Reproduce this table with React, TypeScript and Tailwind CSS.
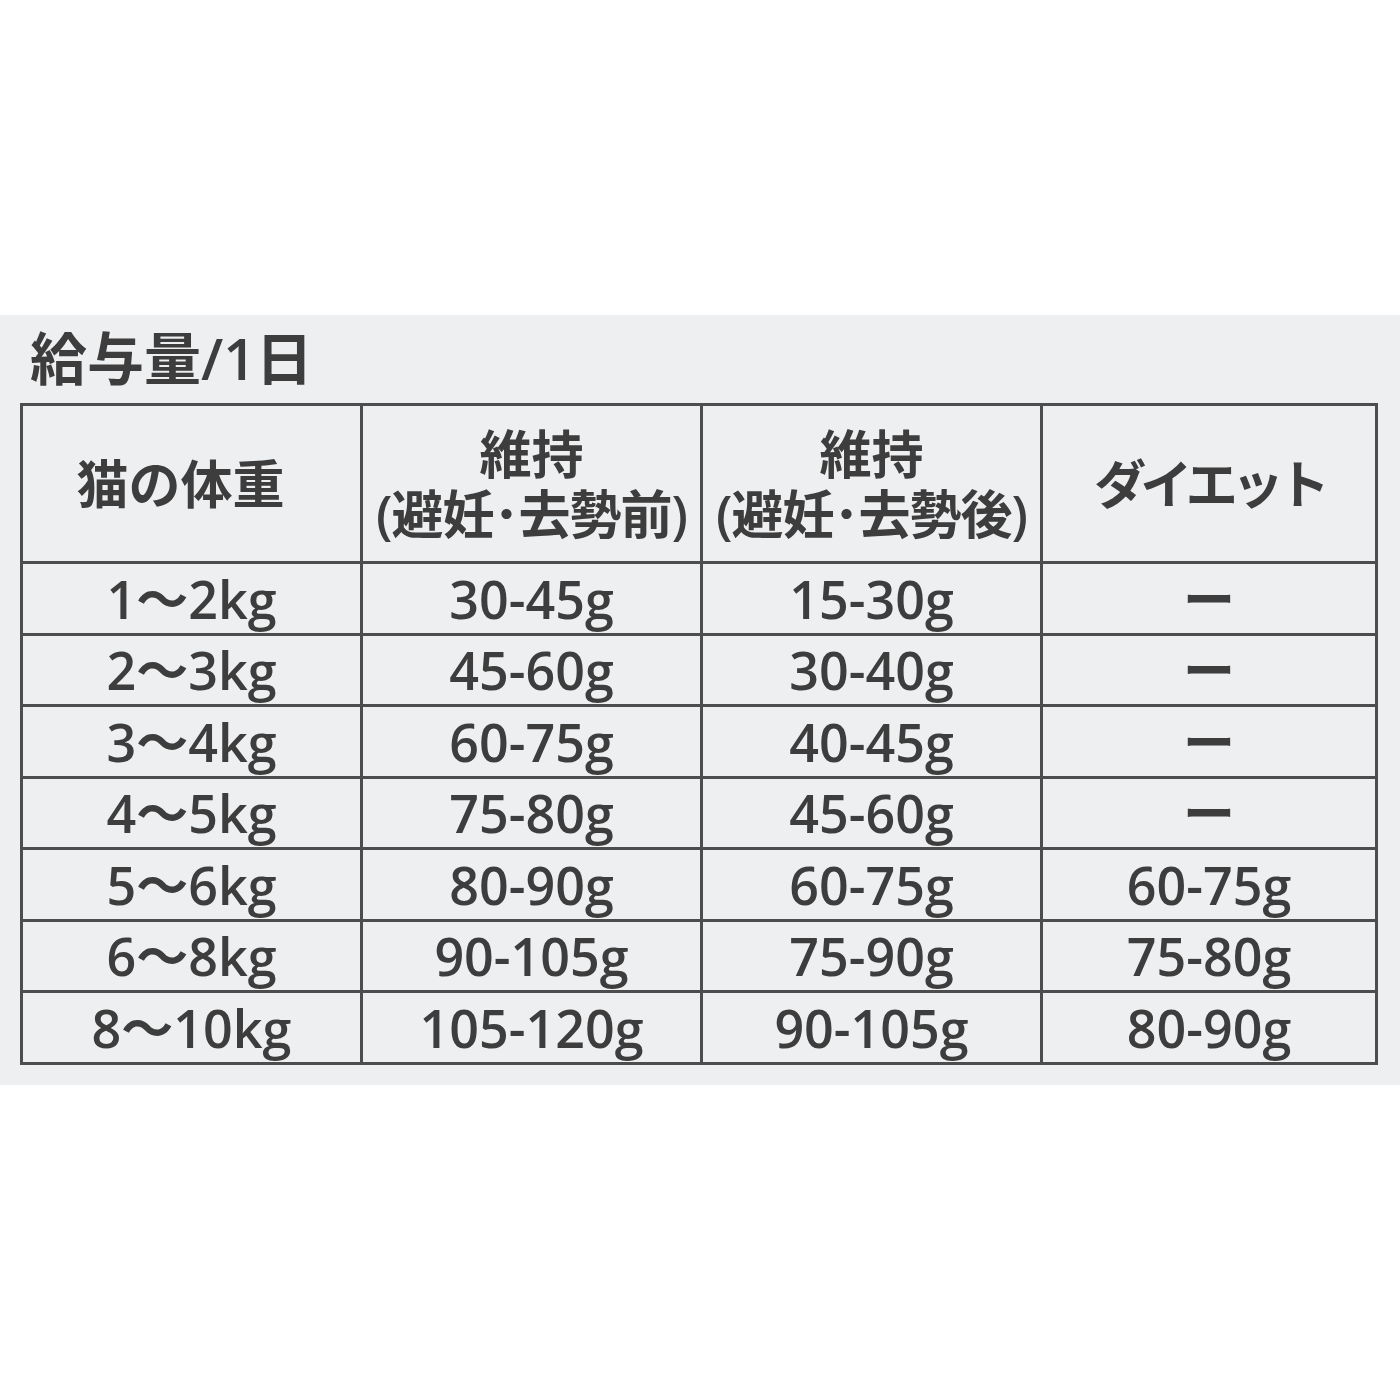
const font = { fontFamily: '"Open Sans", "Noto Sans CJK JP", sans-serif' };

const rows: [string, string, string, string][] = [
  ['1～2kg', '30-45g', '15-30g', 'ー'],
  ['2～3kg', '45-60g', '30-40g', 'ー'],
  ['3～4kg', '60-75g', '40-45g', 'ー'],
  ['4～5kg', '75-80g', '45-60g', 'ー'],
  ['5～6kg', '80-90g', '60-75g', '60-75g'],
  ['6～8kg', '90-105g', '75-90g', '75-80g'],
  ['8～10kg', '105-120g', '90-105g', '80-90g'],
];

const cell = 'border-[3px] border-[#4d4d4d] text-center align-middle p-0';

export default function App() {
  return (
    <div className="w-[1400px] h-[1400px] bg-white pt-[315px]" style={font}>
      <div className="h-[770px] bg-[#eeeff1] pl-[20px] pt-[12px] text-[#3d3d3d] font-semibold">
        <div className="text-[57px] leading-[62px] pl-[10px]">給与量/1日</div>
        <table className="mt-[14px] border-collapse w-[1355px] table-fixed">
          <colgroup>
            <col className="w-[340px]" />
            <col className="w-[340px]" />
            <col className="w-[340px]" />
            <col className="w-[335px]" />
          </colgroup>
          <thead>
            <tr className="h-[158px] text-[52px] leading-[60px]">
              <th className={`${cell} font-semibold pr-[22px]`}>猫の体重</th>
              <th className={`${cell} font-semibold`}>
                <div>維持</div>
                <div className="tracking-[-1px]">(避妊･去勢前)</div>
              </th>
              <th className={`${cell} font-semibold`}>
                <div>維持</div>
                <div className="tracking-[-1px]">(避妊･去勢後)</div>
              </th>
              <th className={`${cell} font-semibold tracking-[-6px]`}>ダイエット</th>
            </tr>
          </thead>
          <tbody>
            {rows.map((r, i) => (
              <tr key={i} className={`${i % 2 === 0 ? 'h-[72px]' : 'h-[71px]'} text-[52px] leading-[60px]`}>
                {r.map((v, j) => (
                  <td key={j} className={cell}>
                    {v}
                  </td>
                ))}
              </tr>
            ))}
          </tbody>
        </table>
      </div>
    </div>
  );
}
